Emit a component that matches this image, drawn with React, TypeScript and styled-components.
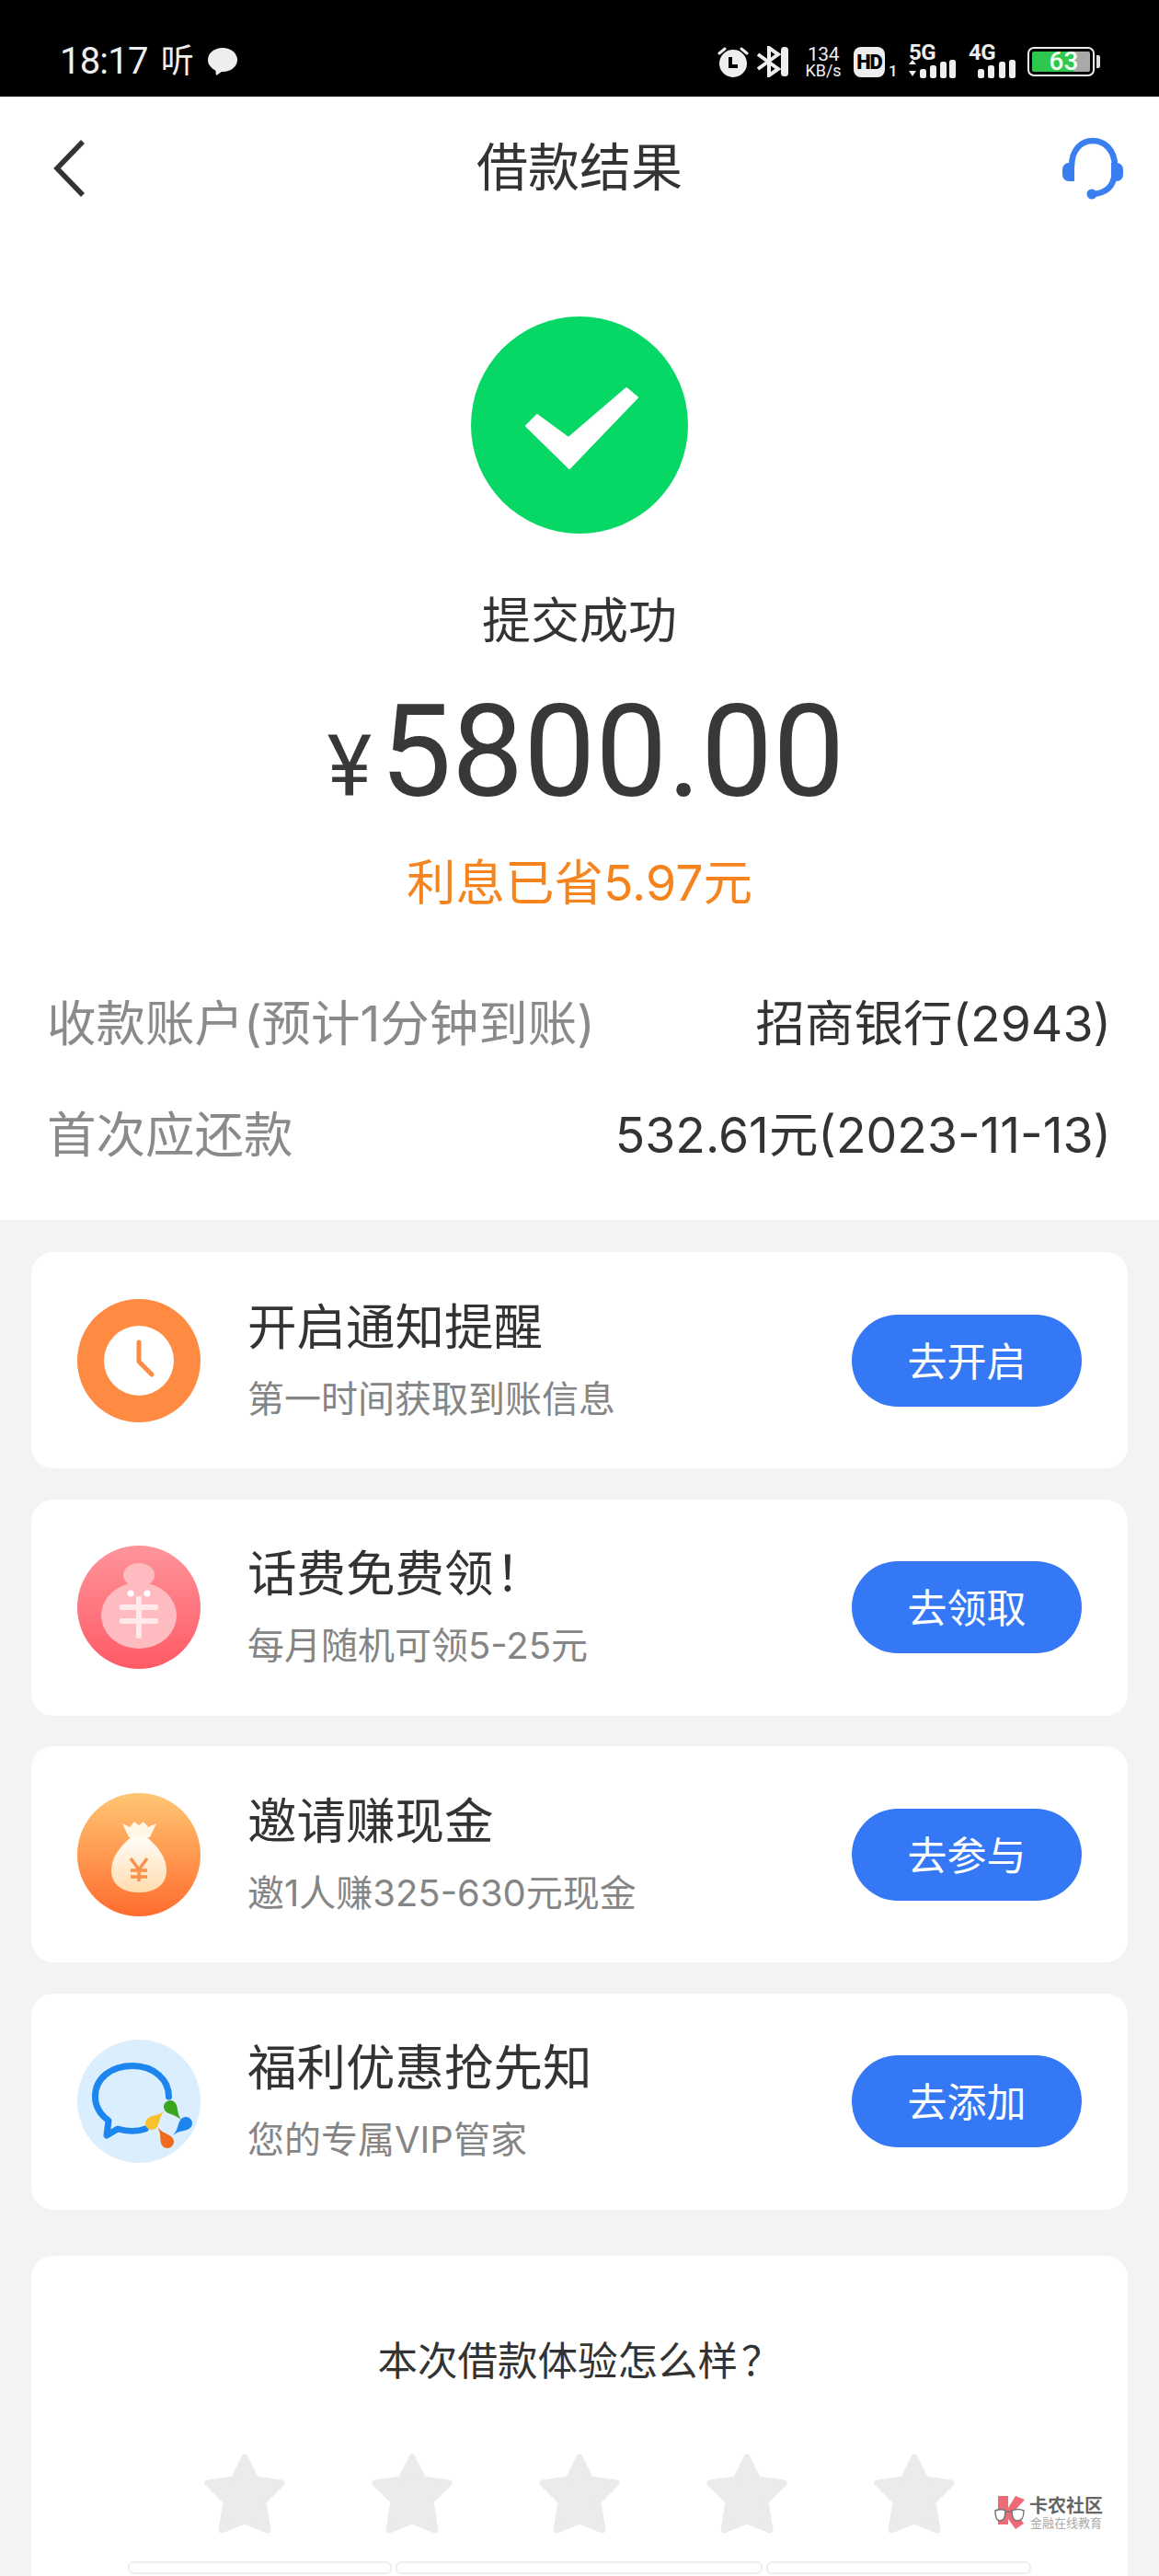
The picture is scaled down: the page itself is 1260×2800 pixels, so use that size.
import React from "react";
import styled, { createGlobalStyle } from "styled-components";

const GlobalStyle = createGlobalStyle`
	* {
		box-sizing: border-box;
	}
	html,
	body {
		margin: 0;
		padding: 0;
		background: #f3f3f3;
	}
	body {
		font-family: Roboto, "Noto Sans CJK SC", sans-serif;
		color: #333;
	}
`;

// wider digits, closer to the reference's body text
const BODY_FONT = `Inter, "Noto Sans CJK SC", sans-serif`;

const Page = styled.div`
	position: relative;
	width: 1260px;
	height: 2800px;
	overflow: hidden;
	background: #f3f3f3;
`;

/* status bar */
const StatusBar = styled.div`
	height: 105px;
	background: #000;
	color: #eee;
	display: flex;
	align-items: center;
	justify-content: space-between;
	padding: 29px 64px 0 65px;
`;

const StatusLeft = styled.div`
	display: flex;
	align-items: center;
	gap: 14px;
`;

const Clock = styled.span`
	font-size: 40px;
	line-height: 40px;
	letter-spacing: -0.8px;
`;

const StatusGlyph = styled.span`
	font-size: 36px;
	line-height: 40px;
`;

const StatusRight = styled.div`
	display: flex;
	align-items: center;
`;

const Speed = styled.div`
	display: flex;
	flex-direction: column;
	align-items: center;
	width: 36px;
	margin-left: 19px;
	font-size: 21px;
	line-height: 19px;
	letter-spacing: -0.5px;
	span {
		font-size: 18px;
		line-height: 16px;
		letter-spacing: 0;
		white-space: nowrap;
	}
`;

const HdBadge = styled.div`
	width: 34px;
	height: 33px;
	margin-left: 15px;
	border-radius: 8px;
	background: #eee;
	color: #000;
	font-size: 22px;
	font-weight: 900;
	line-height: 33px;
	text-align: center;
	letter-spacing: -1px;
`;

const HdSlot = styled.span`
	align-self: flex-end;
	width: 16px;
	margin-left: 4px;
	font-size: 17px;
	font-weight: 500;
	line-height: 16px;
`;

const Signal = styled.div<{ $w: number; $ml: number }>`
	width: ${({ $w }) => $w}px;
	margin-left: ${({ $ml }) => $ml}px;
	display: flex;
	flex-direction: column;
`;

const SignalLabel = styled.span`
	font-size: 24px;
	font-weight: 700;
	line-height: 16px;
	letter-spacing: -0.5px;
`;

const Battery = styled.div`
	position: relative;
	width: 73px;
	height: 32px;
	margin-left: 12px;
	padding: 3px;
	border: 2px solid #eee;
	border-radius: 7px;
	display: flex;
`;

const BatteryFill = styled.div`
	height: 100%;
	background: linear-gradient(90deg, #2ec84f 0 72%, #a9a9a9 72% 100%);
	flex: 1;
	border-radius: 2px;
	color: #f2fff2;
	font-size: 28px;
	font-weight: 500;
	line-height: 22px;
	text-align: center;
	padding-left: 6px;
`;

const BatteryTip = styled.div`
	width: 4px;
	height: 14px;
	margin-left: 2px;
	background: #ddd;
	border-radius: 0 2px 2px 0;
`;

/* nav */
const Nav = styled.div`
	height: 157px;
	background: #fff;
	display: flex;
	align-items: center;
	justify-content: space-between;
	padding: 0 38px 0 56px;
	position: relative;
`;

const NavTitle = styled.h1`
	position: absolute;
	left: 0;
	right: 0;
	top: 47px;
	margin: 0;
	text-align: center;
	font-size: 56px;
	line-height: 62px;
	font-weight: 400;
	color: #333;
`;

const IconBtn = styled.div`
	display: flex;
	margin-top: -2px;
`;

/* result */
const Result = styled.section`
	background: #fff;
	height: 1064px;
	padding-top: 82px;
	display: flex;
	flex-direction: column;
	align-items: center;
`;

const Status = styled.div`
	margin-top: 63px;
	font-size: 53px;
	line-height: 66px;
	color: #333;
`;

const Amount = styled.div`
	margin: 42px 0 0 14px;
	display: flex;
	align-items: baseline;
	height: 134px;
	line-height: 134px;
	font-size: 139px;
	color: #383838;
	font-weight: 400;
`;

const Yen = styled.span`
	font-size: 92px;
	margin-right: 9px;
`;

const Saved = styled.div`
	margin-top: 42px;
	font-family: ${BODY_FONT};
	font-size: 53.5px;
	line-height: 66px;
	color: #f5841f;
`;

const InfoList = styled.div`
	align-self: stretch;
	margin-top: 87px;
	padding: 0 52px 0 51px;
	display: flex;
	flex-direction: column;
	gap: 55px;
`;

const InfoRow = styled.div`
	display: flex;
	justify-content: space-between;
	font-family: ${BODY_FONT};
	font-size: 53.5px;
	line-height: 66px;
	color: #333;
`;

const InfoLabel = styled.span`
	color: #8a8a8a;
`;

/* cards */
const CardList = styled.div`
	padding: 35px 34px 0;
	display: flex;
	flex-direction: column;
	gap: 33.5px;
`;

const Card = styled.div`
	height: 235px;
	background: #fff;
	border-radius: 24px;
	display: flex;
	align-items: center;
	padding: 0 50px;
`;

const CardIcon = styled.div`
	width: 134px;
	height: 134px;
	flex: none;
	display: flex;
`;

const CardText = styled.div`
	flex: 1;
	margin-left: 51px;
	display: flex;
	flex-direction: column;
	gap: 21px;
	margin-top: 1px;
`;

const CardTitle = styled.div`
	font-size: 53.5px;
	line-height: 62px;
	color: #333;
`;

const CardSub = styled.div`
	font-family: ${BODY_FONT};
	font-size: 40px;
	line-height: 50px;
	color: #858585;
`;

// full-width punctuation sits nearer the middle of its cell in the reference
const Punct = styled.span<{ $shift: number }>`
	margin-left: ${({ $shift }) => $shift}px;
`;

const ActionButton = styled.button`
	width: 250px;
	height: 100px;
	border: 0;
	border-radius: 50px;
	background: #3478f6;
	color: #fff;
	font-family: inherit;
	font-size: 43px;
	padding: 0 0 4px;
`;

const RateCard = styled.div`
	margin: 50.5px 34px 0;
	height: 400px;
	background: #fff;
	border-radius: 24px;
	display: flex;
	flex-direction: column;
	align-items: center;
`;

const RateTitle = styled.div`
	margin: 86px 0 0 0;
	font-size: 43.5px;
	line-height: 60px;
	color: #333;
	white-space: nowrap;
`;

const Stars = styled.div`
	margin-top: 68px;
	display: flex;
	gap: 94px;
`;

const Tags = styled.div`
	margin-top: 29px;
	display: flex;
	gap: 4px;
`;

const Tag = styled.div<{ $w: number }>`
	width: ${({ $w }) => $w}px;
	height: 14px;
	border: 2px solid #eee;
	border-radius: 6px;
	background: #fff;
`;

const Watermark = styled.div`
	position: absolute;
	left: 1080px;
	top: 2712px;
	display: flex;
	align-items: flex-start;
	gap: 3px;
`;

const WatermarkText = styled.div`
	display: flex;
	flex-direction: column;
	align-items: center;
`;

const WatermarkName = styled.span`
	font-size: 20px;
	line-height: 24px;
	color: #666;
	font-weight: 700;
`;

const WatermarkSub = styled.span`
	font-size: 13px;
	line-height: 14px;
	color: #aaa;
`;

function AlarmIcon() {
	return (
		<svg width="34" height="33" viewBox="0 0 34 33">
			<circle cx="17" cy="18" r="15" fill="#eee" />
			<path d="M14 11v10h8" fill="none" stroke="#000" strokeWidth="4" />
			<path d="M2 7l6-5M32 7l-6-5" stroke="#eee" strokeWidth="3" strokeLinecap="round" />
		</svg>
	);
}

function BluetoothIcon() {
	return (
		<svg width="36" height="34" viewBox="0 0 36 34" style={{ marginLeft: 8 }}>
			<path d="M2 9l22 16-10 7V2l10 7L2 25" fill="none" stroke="#eee" strokeWidth="4" />
			<rect x="27" y="1" width="8" height="32" rx="3.5" fill="#eee" />
		</svg>
	);
}

function SignalBars({ arrows }: { arrows?: boolean }) {
	const bars = arrows ? [0, 11, 22, 32] : [0, 11, 23, 34];
	const heights = [10, 14, 18, 20];
	return (
		<svg width="52" height="20" viewBox="0 0 52 20">
			{arrows && <path d="M0 5l4-5 4 5zM0 12h8l-4 6z" fill="#eee" />}
			{bars.map((x, i) => (
				<rect
					key={x}
					x={(arrows ? 12 : 10) + x}
					y={20 - heights[i]}
					width="7"
					height={heights[i]}
					rx="2.5"
					fill="#eee"
				/>
			))}
		</svg>
	);
}

function BackIcon() {
	return (
		<svg width="38" height="64" viewBox="0 0 38 64">
			<path d="M34 3L6 32l28 29" fill="none" stroke="#333" strokeWidth="5.5" />
		</svg>
	);
}

function HeadsetIcon() {
	return (
		<svg width="68" height="68" viewBox="0 0 68 68">
			<path d="M11 32C11 13 22 4 34 4s24 9 24 28M57 44C55 55 47 61 34 62" fill="none" stroke="#3a7ff0" strokeWidth="6.5" />
			<path d="M14 28H8a7 7 0 0 0-7 7v6a7 7 0 0 0 7 7h6z" fill="#3a7ff0" />
			<path d="M54 28h6a7 7 0 0 1 7 7v6a7 7 0 0 1-7 7h-6z" fill="#3a7ff0" />
			<circle cx="33" cy="62" r="5.5" fill="#3a7ff0" />
		</svg>
	);
}

function SuccessIcon() {
	return (
		<svg width="236" height="236" viewBox="0 0 236 236">
			<circle cx="118" cy="118" r="118" fill="#07d765" />
			<path
				d="M60 119L72 107L106 132L169 78L181 88L107 165Z"
				fill="#fff"
				stroke="#fff"
				strokeWidth="2"
				strokeLinejoin="round"
			/>
		</svg>
	);
}

function ClockBadge() {
	return (
		<svg width="134" height="134" viewBox="0 0 134 134">
			<circle cx="67" cy="67" r="67" fill="#ff8a42" />
			<circle cx="67" cy="67" r="38" fill="#fff" />
			<path d="M67 47v21l14 14" fill="none" stroke="#ff8a42" strokeWidth="5" strokeLinecap="round" strokeLinejoin="round" />
		</svg>
	);
}

function PhoneFeeBadge() {
	return (
		<svg width="134" height="134" viewBox="0 0 134 134">
			<defs>
				<linearGradient id="pinkBg" x1="0" y1="0" x2="0" y2="1">
					<stop offset="0" stopColor="#ff949b" />
					<stop offset="1" stopColor="#ff5a65" />
				</linearGradient>
			</defs>
			<circle cx="67" cy="67" r="67" fill="url(#pinkBg)" />
			<ellipse cx="67" cy="76" rx="41" ry="36" fill="#ffbcc0" />
			<ellipse cx="67" cy="32" rx="17" ry="13" fill="#ffbcc0" />
			<rect x="55" y="36" width="24" height="14" fill="#ffbcc0" />
			<circle cx="58" cy="52" r="3.5" fill="#fff" />
			<circle cx="76" cy="52" r="3.5" fill="#fff" />
			<rect x="46" y="64" width="42" height="6" rx="2" fill="#ffe9ea" />
			<rect x="46" y="79" width="42" height="6" rx="2" fill="#ffe9ea" />
			<rect x="64" y="55" width="6" height="46" rx="2" fill="#ffe9ea" />
		</svg>
	);
}

function InviteBadge() {
	return (
		<svg width="134" height="134" viewBox="0 0 134 134">
			<defs>
				<linearGradient id="orangeBg" x1="0" y1="0" x2="0" y2="1">
					<stop offset="0" stopColor="#ffc673" />
					<stop offset="1" stopColor="#ff6c2e" />
				</linearGradient>
				<linearGradient id="bagFill" x1="0" y1="0" x2="0" y2="1">
					<stop offset="0" stopColor="#fffdf8" />
					<stop offset="1" stopColor="#ffdcae" />
				</linearGradient>
			</defs>
			<circle cx="67" cy="67" r="67" fill="url(#orangeBg)" />
			<path d="M49 33l8 4 5-6 5 4 5-4 5 6 9-4-7 15H56z" fill="#fff6e6" />
			<path d="M58 48h18c12 11 21 22 21 36 0 16-13 24-30 24s-30-8-30-24c0-14 9-25 21-36z" fill="url(#bagFill)" />
			<path d="M58 71l9 12 9-12M67 83v13M58 84h18M58 91h18" fill="none" stroke="#f9914a" strokeWidth="3.5" />
		</svg>
	);
}

function Drop({ x, y, angle, color }: { x: number; y: number; angle: number; color: string }) {
	return (
		<path
			transform={`translate(${x} ${y}) rotate(${angle})`}
			d="M0-19C1-9 7-6 7 0A7 7 0 0 1-7 0C-7-6-1-9 0-19Z"
			fill={color}
		/>
	);
}

function ChatBadge() {
	return (
		<svg width="134" height="134" viewBox="0 0 134 134">
			<circle cx="67" cy="67" r="67" fill="#dbeefe" />
			<path
				d="M74 97C66 100 54 100 44 97L32 104L34 88C23 80 19.5 70 19.5 62C19.5 41 38 28.5 60 28.5C84 28.5 99.5 44 99.5 62"
				fill="none"
				stroke="#1c86ee"
				strokeWidth="7"
				strokeLinejoin="round"
				strokeLinecap="round"
			/>
			<Drop x={101} y={73} angle={140} color="#3aa51e" />
			<Drop x={118} y={91} angle={227} color="#1c86ee" />
			<Drop x={98} y={111} angle={-34} color="#ef6c1f" />
			<Drop x={81} y={91} angle={45} color="#f9c22d" />
		</svg>
	);
}

function StarIcon() {
	return (
		<svg width="88" height="89" viewBox="0 0 88 89">
			<path
				d="M44 5L56 29L84 33L64 53L69 84L44 74L19 84L24 53L4 33L32 29Z"
				fill="#ebebeb"
				stroke="#ebebeb"
				strokeWidth="7"
				strokeLinejoin="round"
			/>
		</svg>
	);
}

function WatermarkLogo() {
	return (
		<svg width="36" height="38" viewBox="0 0 36 38">
			<path d="M5 1h11v13L24 1l10 4-11 12 10 14-9 6-8-11v6H5z" fill="#ee6a75" />
			<path d="M2 17c5-2 8-2 11 0 0 8-2 11-6 11s-5-4-5-11zM20 17c5-2 9-2 13 0 0 8-2 11-7 11-4 0-6-4-6-11zM13 18h7" fill="#fff" stroke="#777" strokeWidth="1.5" />
		</svg>
	);
}

const cards = [
	{ title: "开启通知提醒", sub: "第一时间获取到账信息", action: "去开启", icon: <ClockBadge /> },
	{ title: <>话费免费领<Punct $shift={2}>！</Punct></>, sub: "每月随机可领5-25元", action: "去领取", icon: <PhoneFeeBadge /> },
	{ title: "邀请赚现金", sub: "邀1人赚325-630元现金", action: "去参与", icon: <InviteBadge /> },
	{ title: "福利优惠抢先知", sub: "您的专属VIP管家", action: "去添加", icon: <ChatBadge /> },
];

function App() {
	return (
		<Page>
			<GlobalStyle />
			<StatusBar>
				<StatusLeft>
					<Clock>18:17</Clock>
					<StatusGlyph>听</StatusGlyph>
					<svg width="34" height="32" viewBox="0 0 34 32">
						<ellipse cx="17" cy="14" rx="16" ry="13" fill="#eee" />
						<path d="M9 23l1 8 9-6z" fill="#eee" />
					</svg>
				</StatusLeft>
				<StatusRight>
					<AlarmIcon />
					<BluetoothIcon />
					<Speed>
						134
						<span>KB/s</span>
					</Speed>
					<HdBadge>HD</HdBadge>
					<HdSlot>1</HdSlot>
					<Signal $w={50} $ml={6}>
						<SignalLabel>5G</SignalLabel>
						<SignalBars arrows />
					</Signal>
					<Signal $w={52} $ml={15}>
						<SignalLabel>4G</SignalLabel>
						<SignalBars />
					</Signal>
					<Battery>
						<BatteryFill>63</BatteryFill>
					</Battery>
					<BatteryTip />
				</StatusRight>
			</StatusBar>

			<Nav>
				<IconBtn>
					<BackIcon />
				</IconBtn>
				<NavTitle>借款结果</NavTitle>
				<IconBtn>
					<HeadsetIcon />
				</IconBtn>
			</Nav>

			<Result>
				<SuccessIcon />
				<Status>提交成功</Status>
				<Amount>
					<Yen>¥</Yen>5800.00
				</Amount>
				<Saved>利息已省5.97元</Saved>
				<InfoList>
					<InfoRow>
						<InfoLabel>收款账户(预计1分钟到账)</InfoLabel>
						<span>招商银行(2943)</span>
					</InfoRow>
					<InfoRow>
						<InfoLabel>首次应还款</InfoLabel>
						<span>532.61元(2023-11-13)</span>
					</InfoRow>
				</InfoList>
			</Result>

			<CardList>
				{cards.map((card) => (
					<Card key={card.action}>
						<CardIcon>{card.icon}</CardIcon>
						<CardText>
							<CardTitle>{card.title}</CardTitle>
							<CardSub>{card.sub}</CardSub>
						</CardText>
						<ActionButton>{card.action}</ActionButton>
					</Card>
				))}
			</CardList>

			<RateCard>
				<RateTitle>
					本次借款体验怎么样<Punct $shift={4}>？</Punct>
				</RateTitle>
				<Stars>
					{[1, 2, 3, 4, 5].map((n) => (
						<StarIcon key={n} />
					))}
				</Stars>
				<Tags>
					<Tag $w={287} />
					<Tag $w={399} />
					<Tag $w={288} />
				</Tags>
			</RateCard>

			<Watermark>
				<WatermarkLogo />
				<WatermarkText>
					<WatermarkName>卡农社区</WatermarkName>
					<WatermarkSub>金融在线教育</WatermarkSub>
				</WatermarkText>
			</Watermark>
		</Page>
	);
}

export default App;
